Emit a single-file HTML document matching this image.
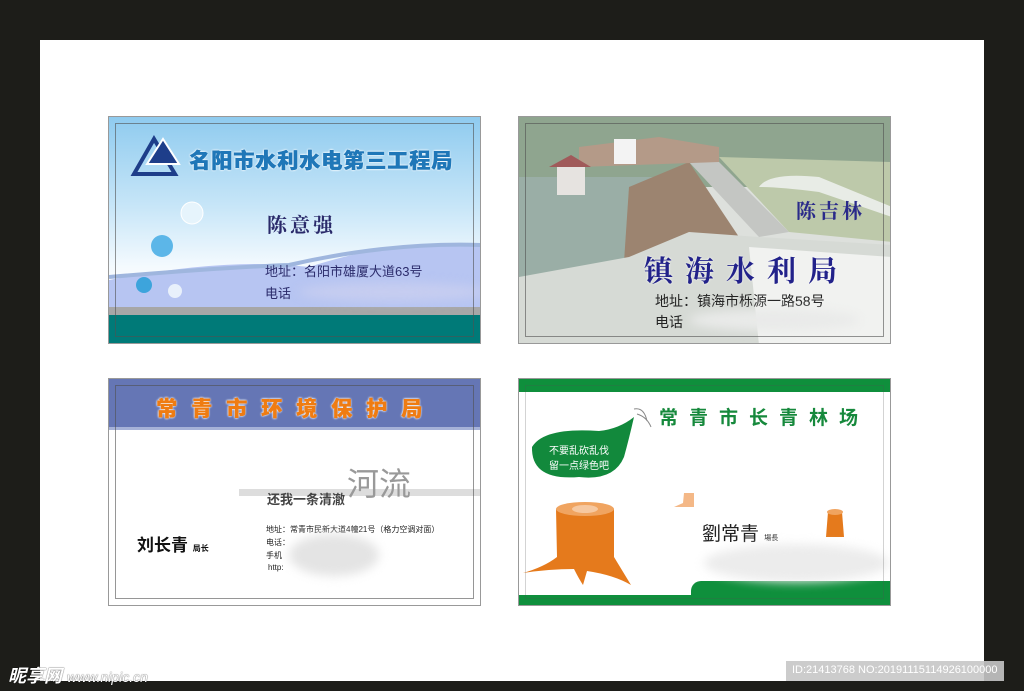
<!DOCTYPE html>
<html><head><meta charset="utf-8"><style>
*{margin:0;padding:0;box-sizing:border-box}
body{width:1024px;height:691px;background:#1d1d19;position:relative;overflow:hidden;font-family:"Liberation Sans","Noto Sans CJK SC",sans-serif}
.sheet{position:absolute;left:40px;top:40px;width:944px;height:641px;background:#fff}
.card{position:absolute;width:373px;height:228px;border:1px solid #999;overflow:hidden}
.inner{position:absolute;left:6px;top:6px;right:6px;bottom:6px;border:1px solid rgba(80,80,80,.6)}
.a{position:absolute;white-space:nowrap}
.blur{position:absolute;filter:blur(5px);border-radius:50%}
</style></head><body>
<div class="sheet"></div>

<!-- card 1 -->
<div class="card" style="left:108px;top:116px;background:linear-gradient(#8fcbef 0%,#c8e6f8 40%,#f2f9fe 65%,#fff 75%)">
 <svg class="a" style="left:0;top:0" width="373" height="228">
  <path d="M0 163 Q120 140 200 150 Q300 118 373 130 L373 192 L0 192Z" fill="#b7c5f2"/>
  <path d="M0 160 Q120 150 180 148 Q280 125 373 128" stroke="#9fb6de" stroke-width="4" fill="none"/>
  <rect x="0" y="190" width="373" height="8" fill="#a7a7a7"/>
  <rect x="0" y="198" width="373" height="30" fill="#007a78"/>
  <circle cx="83" cy="96" r="11" fill="#e6f4fc" stroke="#fff"/>
  <circle cx="53" cy="129" r="11" fill="#5cb6e8"/>
  <circle cx="35" cy="168" r="8" fill="#3da4dc"/>
  <circle cx="66" cy="174" r="7" fill="#e8f0fb"/>
  <path d="M25 57 L45 22 L66 57Z" fill="none" stroke="#1e3e8a" stroke-width="4"/>
  <path d="M38 47 L54 22 L70 47Z" fill="#1e3e8a" stroke="#fff" stroke-width="2"/>
 </svg>
 <div class="a" style="left:80px;top:28px;font-size:21px;font-weight:900;color:#1f77b8;letter-spacing:1px;text-shadow:0.6px 0 0 #1f77b8,0 0 2px #fff,0 0 2px #fff">名阳市水利水电第三工程局</div>
 <div class="a" style="left:158px;top:92px;font-size:20px;font-weight:bold;color:#2a2a6a;letter-spacing:3px;font-family:'Noto Serif CJK SC',serif">陈意强</div>
 <div class="a" style="left:156px;top:144px;font-size:13px;color:#2a2a6a">地址：名阳市雄厦大道63号</div>
 <div class="a" style="left:156px;top:166px;font-size:13px;color:#2a2a6a">电话</div>
 <div class="blur" style="left:190px;top:166px;width:190px;height:18px;background:#c6cdf0"></div>
 <div class="inner"></div>
</div>

<!-- card 2 -->
<div class="card" style="left:518px;top:116px;background:#dde0dc">
 <svg class="a" style="left:0;top:0" width="373" height="228">
  <rect width="373" height="70" fill="#8fa58f"/>
  <rect y="60" width="150" height="100" fill="#9aaea6"/>
  <path d="M110 70 L170 45 L220 120 L105 145Z" fill="#9c8470"/>
  <path d="M170 45 L200 45 L270 115 L240 120Z" fill="#c4c6c3"/>
  <path d="M200 40 L373 45 L373 125 L270 115Z" fill="#bdc9aa"/>
  <path d="M240 70 Q250 55 300 60 L373 90 L373 100 L300 75 Q260 70 240 70Z" fill="#e8ece6"/>
  <path d="M60 30 L140 20 L200 30 L200 45 L60 50Z" fill="#b49a88"/>
  <rect x="95" y="22" width="22" height="25" fill="#f3f3f3"/>
  <rect x="38" y="48" width="28" height="30" fill="#e6e3e0"/>
  <path d="M30 50 L52 38 L72 50Z" fill="#a05a5a"/>
  <path d="M0 160 L110 140 L170 115 L240 120 L373 128 L373 228 L0 228Z" fill="#d6dad5"/>
  <path d="M230 130 L373 140 L373 228 L240 228Z" fill="#f1f2f0"/>
 </svg>
 <div class="a" style="left:277px;top:78px;font-size:20px;font-weight:bold;color:#2a2a8a;letter-spacing:3px;font-family:'Noto Serif CJK SC',serif">陈吉林</div>
 <div class="a" style="left:125px;top:132px;font-size:29px;font-weight:bold;color:#22228a;letter-spacing:12px;font-family:'Noto Serif CJK SC',serif;text-shadow:0 0 2px #fff">镇海水利局</div>
 <div class="a" style="left:136px;top:174px;font-size:14px;color:#222">地址：镇海市栎源一路58号</div>
 <div class="a" style="left:136px;top:195px;font-size:14px;color:#222">电话</div>
 <div class="blur" style="left:170px;top:192px;width:170px;height:22px;background:#e9eae9"></div>
 <div class="inner"></div>
</div>

<!-- card 3 -->
<div class="card" style="left:108px;top:378px;background:#fff">
 <div class="a" style="left:0;top:0;width:373px;height:48px;background:#6576b5"></div>
 <div class="a" style="left:0;top:48px;width:373px;height:3px;background:#a6b2d8"></div>
 <div class="a" style="left:47px;top:14px;font-size:21px;font-weight:900;color:#ef7c12;letter-spacing:14px;text-shadow:0.5px 0 0 #ef7c12,0 0 2px #fff,0 0 2px #fff">常青市环境保护局</div>
 <div class="a" style="left:130px;top:110px;width:243px;height:7px;background:#ddd"></div>
 <div class="a" style="left:238px;top:80px;font-size:32px;color:#999">河流</div>
 <div class="a" style="left:158px;top:110px;font-size:13px;font-weight:bold;color:#444">还我一条清澈</div>
 <div class="a" style="left:157px;top:145px;font-size:8px;color:#222">地址：常青市民新大道4幢21号（格力空调对面）</div>
 <div class="a" style="left:157px;top:158px;font-size:8px;color:#222">电话：</div>
 <div class="a" style="left:157px;top:171px;font-size:8px;color:#222">手机</div>
 <div class="a" style="left:159px;top:184px;font-size:8px;color:#222">http:</div>
 <div class="blur" style="left:180px;top:155px;width:90px;height:42px;background:#e4e4e4"></div>
 <div class="a" style="left:28px;top:152px;font-size:17px;font-weight:bold;color:#111">刘长青 <span style="font-size:8px">局长</span></div>
 <div class="inner"></div>
</div>

<!-- card 4 -->
<div class="card" style="left:518px;top:378px;background:#fff">
 <div class="a" style="left:0;top:0;width:373px;height:13px;background:#0f8f3c"></div>
 <div class="a" style="left:0;top:216px;width:373px;height:12px;background:#0f8f3c"></div>
 <div class="a" style="left:172px;top:202px;width:201px;height:20px;background:#0f8f3c;border-radius:10px 0 0 0"></div>
 <div class="a" style="left:140px;top:24px;font-size:19px;font-weight:bold;color:#16893c;letter-spacing:11px">常青市长青林场</div>
 <svg class="a" style="left:0;top:0" width="373" height="228">
  <path d="M13 68 Q25 48 80 52 Q100 50 115 38 Q110 60 105 78 Q95 102 60 98 Q12 102 13 68Z" fill="#12893c"/>
  <path d="M115 30 Q125 28 128 42 M118 35 Q128 38 132 48" stroke="#888" fill="none"/>
  <path d="M37 130 L38 178 Q25 188 4 194 Q30 190 55 190 Q60 200 64 206 L68 192 Q95 196 112 206 L95 178 L95 130Z" fill="#e57a1c"/>
  <ellipse cx="66" cy="130" rx="29" ry="7" fill="#f0a460"/>
  <ellipse cx="66" cy="130" rx="13" ry="4" fill="#f6c8a0"/>
  <path d="M165 114 L164 124 L155 128 L175 128 L175 114Z" fill="#f4b887"/>
  <path d="M309 133 L307 158 L325 158 L323 133Z" fill="#e57a1c"/>
  <ellipse cx="316" cy="133" rx="8" ry="3" fill="#f0a460"/>
 </svg>
 <div class="a" style="left:30px;top:65px;font-size:10px;color:#fff;line-height:15px">不要乱砍乱伐<br>留一点绿色吧</div>
 <div class="a" style="left:183px;top:140px;font-size:19px;color:#222">劉常青 <span style="font-size:7px">場長</span></div>
 <div class="blur" style="left:185px;top:165px;width:185px;height:38px;background:#ececec"></div>
 <div class="inner" style="border-color:rgba(80,80,80,.25)"></div>
</div>

<div class="a" style="left:8px;top:662px;font-size:18px;font-weight:bold;font-style:italic;color:#fff;text-shadow:0 0 1px #000">昵享网 <span style="font-size:14px;font-weight:normal">www.nipic.cn</span></div>
<div class="a" style="left:786px;top:661px;width:218px;height:20px;background:#c7c7c7;opacity:.9"></div>
<div class="a" style="left:792px;top:664px;font-size:11px;color:#fff">ID:21413768 NO:20191115114926100000</div>
</body></html>
